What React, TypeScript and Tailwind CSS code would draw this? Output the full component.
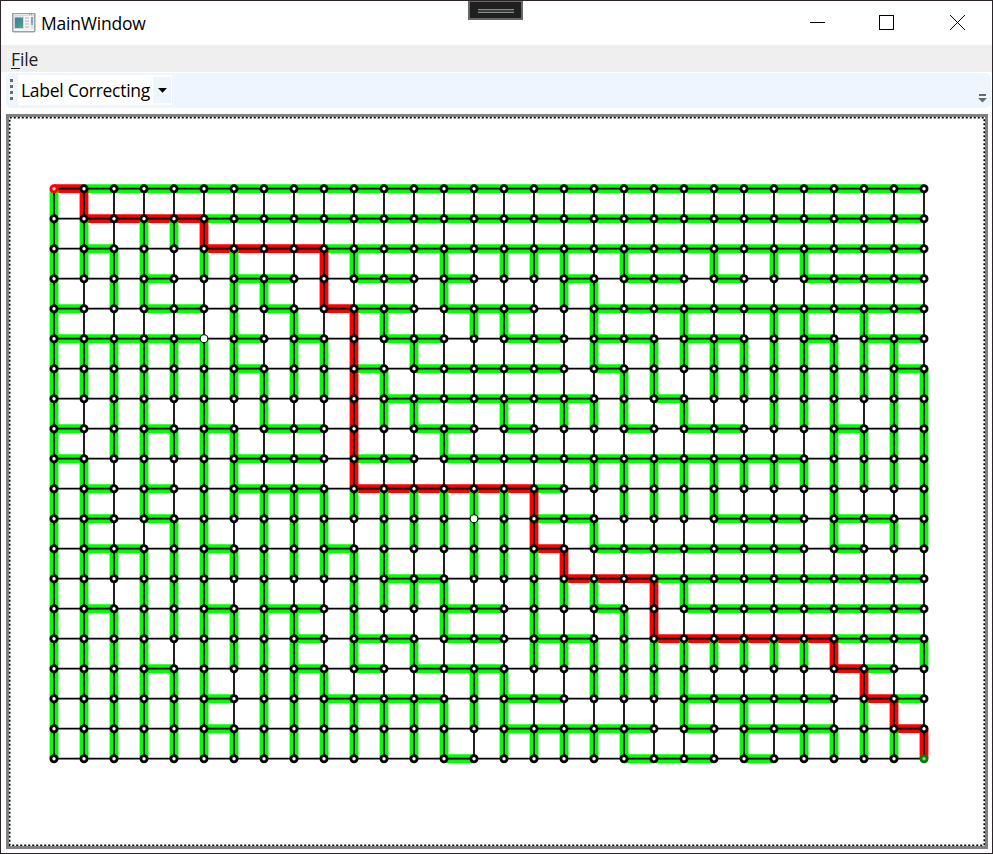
import React from "react";

// Horizontal tree edges of each row, as [first column, last column] runs.
// Every node that is not reached from its left neighbour is reached from above.
const RUNS: [number, number][][] = [
  [[0, 29]],
  [[1, 29]],
  [[1, 2], [5, 29]],
  [[3, 4], [6, 8], [10, 12], [13, 14], [17, 18], [19, 21], [22, 23], [25, 29]],
  [[0, 1], [3, 5], [7, 8], [9, 12], [13, 16], [18, 29]],
  [[0, 5], [6, 7], [8, 9], [11, 13], [15, 17], [18, 20], [21, 23], [25, 26], [27, 29]],
  [[6, 7], [10, 11], [12, 17], [18, 19], [28, 29]],
  [[11, 18], [20, 21]],
  [[0, 1], [3, 4], [5, 6], [7, 9], [12, 14], [15, 16], [19, 20], [21, 23], [26, 27]],
  [[0, 1], [6, 9], [10, 12], [13, 25]],
  [[1, 2], [3, 4], [6, 9], [10, 17]],
  [[1, 2], [3, 4], [16, 18], [22, 25], [26, 28]],
  [[1, 3], [5, 6], [9, 10], [16, 17], [18, 25], [26, 27]],
  [[11, 13], [17, 29]],
  [[1, 2], [5, 6], [7, 9], [13, 15], [18, 19], [21, 29]],
  [[8, 9], [10, 12], [13, 15], [16, 18], [20, 29]],
  [[3, 4], [8, 9], [10, 11], [12, 15], [26, 28]],
  [[5, 6], [9, 13], [15, 17], [21, 26], [27, 29]],
  [[5, 6], [15, 20], [21, 22], [23, 26], [28, 29]],
  [[13, 14], [19, 22], [23, 24]],
];

const COLS = 30;
const ROWS = 20;
const X = (c: number) => 54 + c * 30;
const Y = (r: number) => 188.6 + r * 30;

const fromLeft = (c: number, r: number) => RUNS[r].some(([a, b]) => c > a && c <= b);

function tracePath(): Set<string> {
  const keys = new Set<string>();
  let c = COLS - 1;
  let r = ROWS - 1;
  while (c > 0 || r > 0) {
    keys.add(`${c},${r}`);
    if (fromLeft(c, r)) c--;
    else r--;
  }
  return keys;
}

const PATH = tracePath();

function Graph() {
  const edges: { d: string; red: boolean; vert: boolean }[] = [];
  for (let r = 0; r < ROWS; r++) {
    for (let c = 0; c < COLS; c++) {
      if (c + r === 0) continue;
      const left = fromLeft(c, r);
      edges.push({
        d: left ? `M${X(c - 1)} ${Y(r)}H${X(c)}` : `M${X(c)} ${Y(r - 1)}V${Y(r)}`,
        red: PATH.has(`${c},${r}`),
        vert: !left,
      });
    }
  }
  const join = (red: boolean, vert: boolean) =>
    edges.filter((e) => e.red === red && e.vert === vert).map((e) => e.d).join("");

  const rows = Array.from({ length: ROWS }, (_, r) => `M54 ${Y(r)}H924`).join("");
  const cols = Array.from({ length: COLS }, (_, c) => `M${X(c)} ${Y(0)}V${Y(ROWS - 1)}`).join("");

  const nodes: React.ReactNode[] = [];
  for (let r = 0; r < ROWS; r++) {
    for (let c = 0; c < COLS; c++) {
      const hollow = (c === 5 && r === 5) || (c === 14 && r === 11);
      const color = c + r === 0 ? "#ff0000" : c === COLS - 1 && r === ROWS - 1 ? "#008000" : "#000";
      const fill = color === "#008000" ? "#8fd08f" : color === "#ff0000" ? "#ffd0d0" : "#fff";
      nodes.push(
        <circle
          key={`${c}-${r}`}
          cx={X(c)}
          cy={Y(r) + 0.1}
          r={hollow ? 3.9 : 3.1}
          fill={fill}
          stroke={color}
          strokeWidth={hollow ? 1.1 : 2.8}
        />,
      );
    }
  }

  return (
    <svg width="973" height="725" viewBox="9 117 973 725" className="block" fill="none">
      <path d={join(false, false)} stroke="#00ff00" strokeWidth="8.6" />
      <path d={join(true, false)} stroke="#ff0000" strokeWidth="8.6" />
      <path d={join(false, true)} stroke="#00ff00" strokeWidth="8.8" />
      <path d={join(true, true)} stroke="#ff0000" strokeWidth="8.8" />
      <path d={rows} stroke="#000" strokeWidth="1.7" />
      <path d={cols} stroke="#000" strokeWidth="1.75" />
      {nodes}
    </svg>
  );
}

function AppIcon() {
  return (
    <svg width="24" height="21" viewBox="0 0 24 21" className="block shrink-0">
      <defs>
        <linearGradient id="pane" x1="0" y1="0" x2="1" y2="1">
          <stop offset="0" stopColor="#4676a8" />
          <stop offset="0.55" stopColor="#3f9590" />
          <stop offset="1" stopColor="#58b078" />
        </linearGradient>
      </defs>
      <rect x="0.75" y="0.25" width="22" height="18.5" rx="1" fill="#f4f5f6" stroke="#9a9fa4" strokeWidth="1.5" />
      <path d="M2 2.2H22" stroke="#c9cdd1" strokeWidth="1" />
      <path d="M17 1.2H21" stroke="#6f7d8c" strokeWidth="1" strokeDasharray="1 1" />
      <rect x="2.5" y="4" width="9" height="11.5" fill="url(#pane)" stroke="#d4d8dc" strokeWidth="1" />
      <path d="M13 5H17M13 8H17M13 11H17M13 14H17" stroke="#c6c9cc" strokeWidth="1.5" />
      <rect x="18.5" y="4" width="3" height="12" fill="#dfe3e6" />
      <path d="M20 4V10" stroke="#3f78a8" strokeWidth="1.2" />
      <path d="M20 10V12" stroke="#4aa56c" strokeWidth="1.2" />
    </svg>
  );
}

export default function App() {
  return (
    <div className="relative flex h-[854px] w-[993px] flex-col overflow-hidden border border-b-0 border-[#2b2529] bg-white font-['Open_Sans','Noto_Sans',sans-serif] text-black">
      <header className="flex h-11 shrink-0 items-center pl-[11px]">
        <AppIcon />
        <span className="ml-[5px] text-[17.5px] leading-6 tracking-[-0.2px]">MainWindow</span>
        <div className="ml-auto mr-2 flex">
          <svg width="176" height="44" viewBox="808 1 176 44" fill="none" stroke="#000" className="block" shapeRendering="crispEdges">
            <path d="M810 22.5H825" />
            <path d="M879.5 15.5H893.5V29.5H879.5Z" />
            <path d="M950 15L965 30M965 15L950 30" shapeRendering="auto" />
          </svg>
        </div>
      </header>

      <nav className="flex h-[27px] shrink-0 items-center bg-[#efefef] pl-[10px] text-[17.5px] leading-6 tracking-[-0.1px] text-[#212121]">
        <span className="mt-px">
          <span className="underline decoration-1 underline-offset-2">F</span>ile
        </span>
      </nav>

      <div className="ml-[5px] mr-px mt-px flex h-[35px] shrink-0 items-start rounded-[5px] bg-[#eef5fd]">
        <svg width="12" height="35" viewBox="0 0 12 35" className="block shrink-0">
          <path d="M5.5 6V27" stroke="#6b6b6b" strokeWidth="3" strokeDasharray="3 3" />
        </svg>
        <div className="mt-0.5 flex h-[30px] items-stretch bg-white">
          <span className="w-[135px] whitespace-nowrap pl-[3px] text-[17.5px] leading-[31px] tracking-[-0.27px]">
            Label Correcting
          </span>
          <span className="my-0.5 mr-px flex w-[18px] items-center justify-center bg-[#eef5fd]">
            <svg width="9" height="5" viewBox="0 0 9 5" className="block">
              <path d="M0 0H9L4.5 4.7Z" fill="#000" />
            </svg>
          </span>
        </div>
        <svg width="10" height="11" viewBox="0 0 10 11" className="ml-auto mr-[4px] mt-[20px] block">
          <path d="M2 2H9" stroke="#6b6b6b" strokeWidth="2" />
          <path d="M1 5H10L5.5 9.5Z" fill="#6b6b6b" />
        </svg>
      </div>

      <main className="relative ml-[5px] mt-[6px] h-[735px] w-[982px] shrink-0 border-[3px] border-[#808080]">
        <Graph />
        <svg width="976" height="729" className="absolute inset-0" fill="none">
          <rect x="0.75" y="0.75" width="974.5" height="727.5" stroke="#000" strokeWidth="1.5" strokeDasharray="2 2" />
        </svg>
      </main>

      <div className="absolute left-[467px] top-[-1px] flex h-5 w-[55px] items-center justify-center border-2 border-[#676767] bg-[#1f1f1f]">
        <span className="mt-0.5 h-1 w-9 border-y border-[#8a8a8a] bg-[#3d3d3d]" />
      </div>
      <div className="absolute inset-x-0 bottom-0 h-px bg-[#2b2529]" />
    </div>
  );
}
